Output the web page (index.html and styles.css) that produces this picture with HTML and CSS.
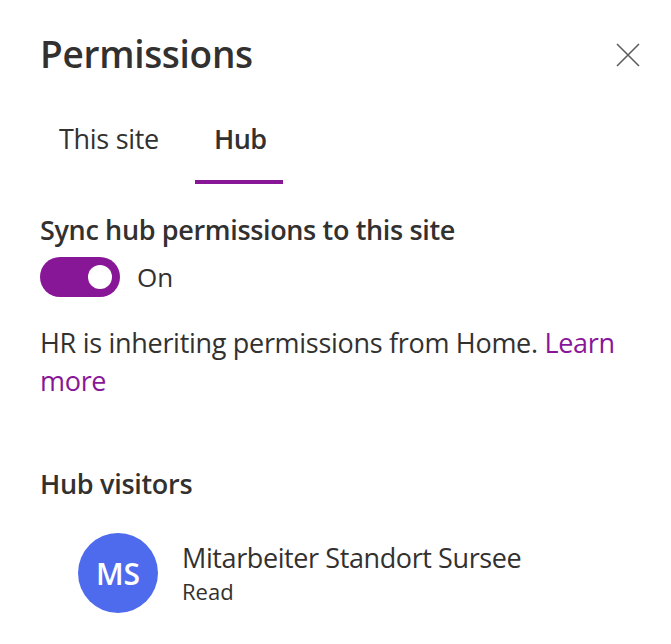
FILE: index.html
```html
<!DOCTYPE html>
<html lang="en">
  <head>
    <meta charset="UTF-8" />
    <meta name="viewport" content="width=device-width, initial-scale=1.0" />
    <title>Permissions</title>
    <link rel="stylesheet" href="styles.css">
  </head>
  <body>
    <div class="panel">
      <div class="panel-header">
        <h1>Permissions</h1>
        <button class="close" aria-label="Close">
          <svg width="24" height="24" viewBox="0 0 24 24">
            <path d="M1 1 L23 23 M23 1 L1 23" stroke="#605e5c" stroke-width="1.6" fill="none" />
          </svg>
        </button>
      </div>

      <div class="tabs">
        <span class="tab">This site</span>
        <span class="tab active">Hub</span>
      </div>

      <h2 class="label">Sync hub permissions to this site</h2>
      <div class="toggle-row">
        <span class="toggle"><span class="knob"></span></span>
        <span class="toggle-text">On</span>
      </div>

      <p class="info">
        HR is inheriting permissions from Home. <a href="#">Learn more</a>
      </p>

      <h2 class="section">Hub visitors</h2>
      <div class="member">
        <div class="avatar">MS</div>
        <div class="member-text">
          <div class="member-name">Mitarbeiter Standort Sursee</div>
          <div class="member-role">Read</div>
        </div>
      </div>
    </div>
  </body>
</html>
```

FILE: styles.css
```css
body {
  margin: 0;
  background-color: white;
  font-family: "Open Sans", "Noto Sans", sans-serif;
  color: #323130;
}

.panel {
  padding: 28px 31px 0 40px;
}

.panel-header {
  display: flex;
  justify-content: space-between;
  align-items: center;
}

h1 {
  margin: 0;
  font-size: 37px;
  line-height: 52px;
  font-weight: 600;
  letter-spacing: -0.3px;
}

.close {
  border: none;
  background: none;
  padding: 0;
  margin-top: 2px;
  display: flex;
}

.tabs {
  display: flex;
  gap: 17px;
  margin-top: 39px;
}

.tab {
  font-size: 27px;
  line-height: 40px;
  letter-spacing: -0.3px;
  padding: 0 19px 21px;
  border-bottom: 4px solid transparent;
}

.tab.active {
  font-weight: 600;
  letter-spacing: -0.5px;
  padding-right: 16px;
  border-bottom-color: #881798;
}

.label {
  margin: 28px 0 0;
  font-size: 27px;
  line-height: 36px;
  font-weight: 600;
  letter-spacing: -0.35px;
}

.toggle-row {
  display: flex;
  align-items: center;
  gap: 17px;
  margin-top: 9px;
}

.toggle {
  width: 80px;
  height: 40px;
  border-radius: 20px;
  background-color: #881798;
  display: flex;
  align-items: center;
  justify-content: flex-end;
  padding-right: 8px;
  box-sizing: border-box;
}

.knob {
  width: 24px;
  height: 24px;
  border-radius: 50%;
  background-color: white;
}

.toggle-text {
  font-size: 26px;
  line-height: 36px;
}

.info {
  margin: 27px 0 0;
  font-size: 27px;
  line-height: 38px;
  letter-spacing: -0.3px;
}

.info a {
  color: #881798;
  text-decoration: none;
}

.section {
  margin: 64px 0 0;
  font-size: 27px;
  line-height: 40px;
  font-weight: 600;
  letter-spacing: -0.3px;
}

.member {
  display: flex;
  align-items: center;
  gap: 24px;
  margin-top: 29px;
  padding-left: 38px;
}

.avatar {
  width: 80px;
  height: 80px;
  border-radius: 50%;
  background-color: #4f6bed;
  color: white;
  font-size: 30px;
  font-weight: 600;
  display: flex;
  align-items: center;
  justify-content: center;
}

.member-name {
  font-size: 27px;
  line-height: 36px;
  letter-spacing: -0.4px;
}

.member-role {
  font-size: 22px;
  line-height: 30px;
}
```
